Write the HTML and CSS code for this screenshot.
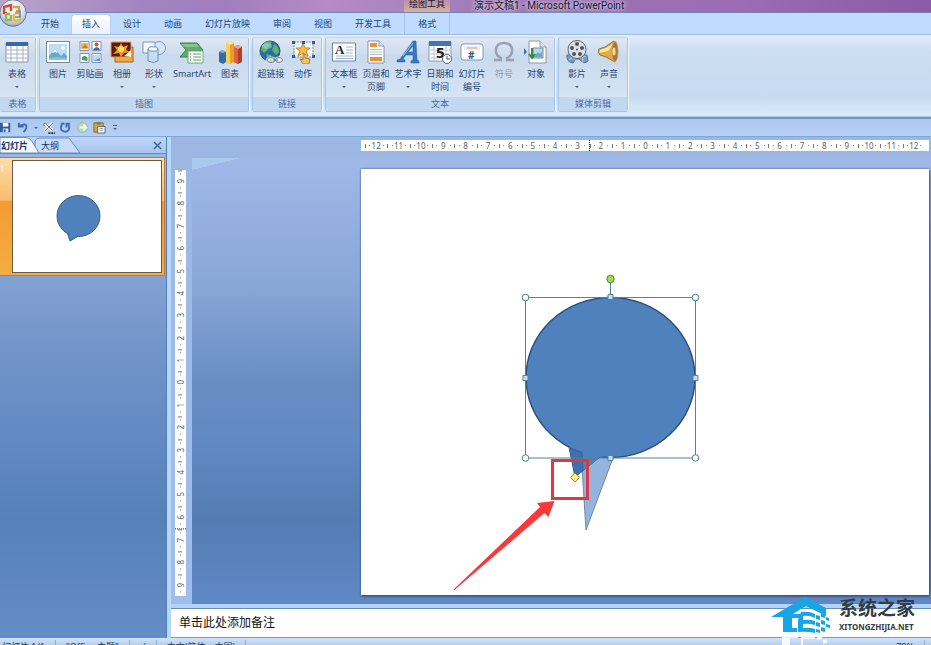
FILE: index.html
```html
<!DOCTYPE html>
<html lang="zh-CN">
<head>
<meta charset="utf-8">
<title>演示文稿1 - Microsoft PowerPoint</title>
<link rel="stylesheet" href="styles.css">
</head>
<body>
<header class="titlebar">
  <span class="context-title">绘图工具</span>
  <h1 class="doc-title">演示文稿1 - Microsoft PowerPoint</h1>
</header>
<button class="orb" aria-label="Office">
  <svg viewBox="0 0 28 28"><defs><radialGradient id="orb" cx=".5" cy=".35" r=".65"><stop offset="0" stop-color="#fff"/><stop offset=".6" stop-color="#e4e6ee"/><stop offset="1" stop-color="#9ba5bd"/></radialGradient></defs><circle cx="14" cy="14" r="13.3" fill="url(#orb)" stroke="#68789c"/><g fill="none" stroke-width="2.4"><path d="M12 12V6L5 8v6h3" stroke="#d8482c"/><path d="M14 8h6v6h-4" stroke="#ef9a38"/><path d="M11 15H7v6h5v-5" stroke="#8dba54"/><path d="M15 15v7l6-1v-6" stroke="#e8c23c"/><path d="M17 12h4v6h-5" stroke="#5a94d4" stroke-width="1.6"/></g></svg>
</button>
<nav class="tabs">
  <a href="#">开始</a><a href="#" class="active">插入</a><a href="#">设计</a><a href="#">动画</a><a href="#">幻灯片放映</a><a href="#">审阅</a><a href="#">视图</a><a href="#">开发工具</a><a href="#" class="context">格式</a>
</nav>
<section class="ribbon">
  <div class="group first">
    <div class="tools">
      <button class="tool"><svg viewBox="0 0 24 24"><path d="M1 3h22v19H1z" fill="#fff" stroke="#8b98ad"/><path d="M1 2h22v4H1z" fill="#3768b4"/><path d="M1 10h22M1 14h22M1 18h22M6 6v16M12 6v16M18 6v16" stroke="#a5b2c6"/></svg><span>表格</span><i class="arrow"></i></button>
    </div>
    <h2>表格</h2>
  </div>
  <div class="group">
    <div class="tools">
      <button class="tool"><svg viewBox="0 0 24 24"><path d="M.5 1.500h23v21H.5z" fill="#fff" stroke="#789"/><path d="M3 4h18v16H3z" fill="#b9def5"/><path d="M3 20v-4l6-7 6 7 3-3 3 3v4z" fill="#6aa5d2"/><path d="M6 13l3-4 3 4-3-1z" fill="#fff"/><path d="M3 18l8-1 10 1v2H3z" fill="#86c6d0"/><circle cx="17" cy="8" r="2" fill="#fff"/></svg><span>图片</span></button>
      <button class="tool"><svg viewBox="0 0 24 24"><g fill="#fff" stroke="#7f94b2"><path d="M2 1.500h9v9H2zM14 1.500h9v9h-9zM2 13.500h9v9H2zM14 13.500h9v9h-9z"/></g><path d="M3 3h7v6H3z" fill="#f0bd42"/><path d="M4 8l3-4 3 4z" fill="#d67b24"/><circle cx="18.500" cy="4.500" r="2" fill="#b35f39"/><path d="M15 10q4-6 7 0z" fill="#356aab"/><path d="M4 20q-1-4 3-4 4 1 2 5z" fill="#4f9f52"/><path d="M15 15h7v6h-7z" fill="#b8dcf1"/><path d="M15 21l7-3v3z" fill="#6094c6"/></svg><span>剪贴画</span></button>
      <button class="tool"><svg viewBox="0 0 24 24"><path d="M5 7h18v15H5z" fill="#f1a93b" stroke="#a76226"/><path d="M1 2h20v15H1z" fill="#5c1b0d" stroke="#e2a064"/><path d="M11 3l2 4 5-2-2 5 4 2-6 1-3 4-2-4-6 1 4-4-3-4 5 1z" fill="#ef982c"/><circle cx="11" cy="9" r="3" fill="#ffe15d"/><path d="M14 16l7-6v7z" fill="#fff3c9"/></svg><span>相册</span><i class="arrow"></i></button>
      <button class="tool"><svg viewBox="0 0 24 24"><circle cx="17" cy="8" r="6.500" fill="#d7e7f6" stroke="#779cc3"/><path d="M1 2h12v11H1z" fill="#f2f7fc" stroke="#7598be"/><path d="M6 9v12q5 3 10 0V9" fill="#c7dcf1" stroke="#6b90bb"/><ellipse cx="11" cy="9" rx="5" ry="2.200" fill="#f4f9fe" stroke="#6b90bb"/></svg><span>形状</span><i class="arrow"></i></button>
      <button class="tool wide"><svg viewBox="0 0 24 24"><path d="M0 3h17l6 7-6 7H0l6-7z" fill="#5cab69" stroke="#3c8050"/><path d="M1 4h16l2 3H4z" fill="#83c58a"/><path d="M8 11h15v12H8z" fill="#fff" stroke="#69a66f"/><path d="M13 14h8M13 17h8M13 20h8" stroke="#5ba066"/><path d="M10 14h1M10 17h1M10 20h1" stroke="#37744a"/></svg><span>SmartArt</span></button>
      <button class="tool"><svg viewBox="0 0 24 24"><path d="M1 12l3-2 4 2v10l-3 2-4-2z" fill="#356aa8"/><path d="M1 12l4 1 3-1-4-2z" fill="#86b4df"/><path d="M8 3l4-2 4 2v19l-4 2-4-2z" fill="#e4a323"/><path d="M8 3l4 2v19l-4-2z" fill="#f8cf55"/><path d="M8 3l4 2 4-2-4-2z" fill="#ffe896"/><path d="M16 7l4-2 4 2v15l-4 2-4-2z" fill="#b93b25"/><path d="M16 7l4 2v15l-4-2z" fill="#dc6342"/><path d="M16 7l4 2 4-2-4-2z" fill="#f7a37d"/></svg><span>图表</span></button>
    </div>
    <h2>插图</h2>
  </div>
  <div class="group">
    <div class="tools">
      <button class="tool"><svg viewBox="0 0 24 24"><circle cx="11" cy="11" r="10" fill="#276fa8" stroke="#255781"/><path d="M5 3q4-3 8-1l-2 4-3 1 1 3-4 3-3-3q0-4 3-7zM15 4q5 2 5 8l-3 3-4-5zM7 14l5 1 1 5-3 1z" fill="#61b16a"/><ellipse cx="8" cy="6" rx="5" ry="3" fill="#b9e4f5" opacity=".5"/><g fill="none" stroke="#f4f6f8" stroke-width="3"><ellipse cx="12" cy="20" rx="3.500" ry="2"/><ellipse cx="20" cy="20" rx="3" ry="2"/></g><g fill="none" stroke="#65717f"><ellipse cx="12" cy="20" rx="4" ry="2.500"/><ellipse cx="20" cy="20" rx="3.500" ry="2.500"/><path d="M14 20h5"/></g></svg><span>超链接</span></button>
      <button class="tool"><svg viewBox="0 0 24 24"><path d="M3 2h19v15H3z" fill="#f1f7fe" stroke="#6b8cb2" stroke-dasharray="2 1"/><path d="M12 3l2 5h5l-4 3 2 5-5-3-5 3 2-5-4-3h5z" fill="#ffbc47" stroke="#cf8525"/><g fill="#315e94"><path d="M1 1h3v3H1zM11 1h3v3h-3zM21 1h3v3h-3zM1 15h3v3H1zM21 15h3v3h-3z"/></g><path d="M12 14l2 1v3l5 1-1 5h-6l-3-5 3 1z" fill="#f8c264" stroke="#b57725"/></svg><span>动作</span></button>
    </div>
    <h2>链接</h2>
  </div>
  <div class="group">
    <div class="tools">
      <button class="tool"><svg viewBox="0 0 24 24"><path d="M.5 3h23v18H.5z" fill="#fff" stroke="#7189a8"/><text x="3" y="14" class="glyph-a">A</text><path d="M14 7h7M14 10h7M14 13h7M4 16h17M4 18.500h17" stroke="#97b9d1"/></svg><span>文本框</span><i class="arrow"></i></button>
      <button class="tool"><svg viewBox="0 0 24 24"><path d="M4 1h11l5 5v17H4z" fill="#fff" stroke="#8494a8"/><path d="M15 1v5h5" fill="#dfe9f2" stroke="#8494a8"/><path d="M6 3h7v4H6zM6 17h12v4H6z" fill="#e69337"/><path d="M6 9.500h12M6 12h12M6 14.500h12" stroke="#b1bdd0"/></svg><span>页眉和<br>页脚</span></button>
      <button class="tool"><svg viewBox="0 0 24 24"><path d="M1 20l3-1L17 1h3l1 19 2 1v2h-8v-2l2-1v-5H10l-3 4 2 1v2H1zM12 12h5V6z" fill="#3477c4" fill-rule="evenodd" stroke="#285c9e" stroke-width=".5"/><path d="M7 16L17 3" stroke="#98c7f2"/></svg><span>艺术字</span><i class="arrow"></i></button>
      <button class="tool"><svg viewBox="0 0 24 24"><path d="M1 2h22v19H1z" fill="#fff" stroke="#899bb3"/><path d="M1 1h22v5H1z" fill="#4773b3"/><path d="M2 10h20M2 14h20M2 18h20M6 6v14M18 6v14" stroke="#b8c5d8"/><text x="8" y="18" class="glyph-five">5</text><circle cx="19" cy="19" r="4.500" fill="#fff" stroke="#5d6877"/><path d="M19 16v3h3" fill="none" stroke="#475463"/></svg><span>日期和<br>时间</span></button>
      <button class="tool"><svg viewBox="0 0 24 24"><rect x="1" y="4" width="22" height="16" rx="2" fill="#fff" stroke="#8797ac"/><path d="M4 6h16v4H4z" fill="#e9edf3"/><path d="M7 8h10" stroke="#ed9b60"/><text x="8" y="19" class="glyph-hash">#</text></svg><span>幻灯片<br>编号</span></button>
      <button class="tool" disabled><svg viewBox="0 0 24 24"><path d="M2 20h7v-2Q3 15 4 9q1-6 8-6t8 6q1 6-5 9v2h7" fill="none" stroke="#9a9fb4" stroke-width="2.400"/></svg><span>符号</span></button>
      <button class="tool"><svg viewBox="0 0 24 24"><path d="M5 1h11l6 6v16H5z" fill="#fff" stroke="#8998aa"/><path d="M16 1v6h6" fill="#e6edf4" stroke="#8998aa"/><path d="M9 8h10v10H9z" fill="#bad6ea" stroke="#778ba1"/><path d="M10 17l4-5 2 2 2-3v6z" fill="#6aa8c8"/><path d="M7 7v9M4 13l3 4 3-4" fill="none" stroke="#348c42" stroke-width="2" transform="translate(1 1)"/><path d="M0 8l3 4-3 3z" fill="#3f73aa"/></svg><span>对象</span></button>
    </div>
    <h2>文本</h2>
  </div>
  <div class="group">
    <div class="tools">
      <button class="tool"><svg viewBox="0 0 24 24"><path d="M2 15q-1 7 6 8l3-4h3q5 6 9 2l-1-6z" fill="#749cc5" stroke="#4e7197"/><path d="M4 20l4-3 3 4M18 22l-1-5 4-1" stroke="#c4d8ed" fill="none"/><circle cx="12" cy="9.500" r="9" fill="#dfe3e8" stroke="#59636e"/><g fill="#4d5660"><circle cx="12" cy="4" r="2"/><circle cx="17" cy="8" r="2"/><circle cx="15" cy="14" r="2"/><circle cx="9" cy="14" r="2"/><circle cx="7" cy="8" r="2"/><circle cx="12" cy="9.500" r="1"/></g></svg><span>影片</span><i class="arrow"></i></button>
      <button class="tool"><svg viewBox="0 0 24 24"><path d="M2 9l6-2L17 1q4 9 1 21L9 17l-6-2q-3-3-1-6z" fill="#dfad43" stroke="#997238"/><path d="M3 10l6-2 8-5-6 8-9 2z" fill="#ffeaa0"/><ellipse cx="18" cy="11.500" rx="3" ry="10" fill="#a57740" stroke="#c69a55"/><ellipse cx="17" cy="11.500" rx="1.500" ry="4" fill="#f8dc91"/></svg><span>声音</span><i class="arrow"></i></button>
    </div>
    <h2>媒体剪辑</h2>
  </div>
</section>
<div class="quick">
  <button aria-label="保存"><svg viewBox="0 0 14 14"><path d="M0 2h11v10H0z" fill="#355b9f"/><path d="M3 2h6v4H3z" fill="#fff"/><path d="M3 8h6v4H3z" fill="#d8e4f2"/><path d="M4 9h2v3H4z" fill="#355b9f"/></svg></button>
  <button aria-label="撤消"><svg viewBox="0 0 14 14"><path d="M2 6q7-4 8-1 1 3-3 7M2 2v4h5" fill="none" stroke="#3b69b3" stroke-width="2"/></svg></button>
  <button class="drop" aria-label="撤消选项"><i class="arrow"></i></button>
  <button aria-label="工具"><svg viewBox="0 0 14 14"><path d="M3 3l8 7M11 2L3 11" stroke="#eef2f5" stroke-width="3"/><path d="M2 3l2-1 1 2 6 6M12 2l-3 3-6 6M1 4l2 1" fill="none" stroke="#5f6a76"/><path d="M7 12h2v2H7zM10 12h2v2h-2zM13 12h1v2h-1z" fill="#222"/></svg></button>
  <button aria-label="重复"><svg viewBox="0 0 14 14"><path d="M3 4q-2 4 0 6 4 3 7 0 2-3 0-6M2 3h4M8 7V3h4" fill="none" stroke="#3c6fbe" stroke-width="2"/></svg></button>
  <button aria-label="继续"><svg viewBox="0 0 14 14"><circle cx="7" cy="7" r="5.500" fill="#b5d9b0" stroke="#9cbca4"/><path d="M4 7h6M8 4l3 3-3 3" fill="none" stroke="#f2faec" stroke-width="2"/></svg></button>
  <button aria-label="粘贴"><svg viewBox="0 0 14 14"><path d="M1 2h10v10H1z" fill="#d8a63c" stroke="#80672c"/><path d="M4 1h4v3H4z" fill="#737a83"/><path d="M5 6h8v7H5z" fill="#fff" stroke="#655f51"/><path d="M7 8h4M7 10h4" stroke="#7791ad"/></svg></button>
  <button class="drop more" aria-label="自定义"><i class="arrow"></i></button>
</div>
<main class="work">
  <aside class="pane">
    <div class="pane-tabs">
      <svg class="tab-lines" viewBox="0 0 80 16" aria-hidden="true"><path d="M35 16V4q1-3 5-3h29l11 15z" fill="#c7dcf8" stroke="#6a8cbf"/><path d="M0 .5h26q4 0 6 4l7 11.500H0z" fill="#f5f9ff" stroke="#6a8cbf"/></svg>
      <button class="pane-tab current">幻灯片</button><button class="pane-tab">大纲</button>
      <button class="close" aria-label="关闭"><svg viewBox="0 0 10 10"><path d="M1 1l8 8M9 1L1 9" stroke="#34609f" stroke-width="1.500"/></svg></button>
    </div>
    <div class="thumb-row">
      <span class="num">1</span>
      <svg class="thumb" viewBox="0 0 148 111"><path d="M54 71l3 9 10-6" fill="#4f81bd" stroke="#385d8a"/><ellipse cx="65.500" cy="55" rx="21.500" ry="20.500" fill="#4f81bd" stroke="#385d8a"/><path d="M55 69l2.500 10 8-5z" fill="#4f81bd"/></svg>
    </div>
  </aside>
  <section class="editor">
    <div class="stage">
      <ol class="ruler across"><li>12</li><li>11</li><li>10</li><li>9</li><li>8</li><li>7</li><li>6</li><li>5</li><li>4</li><li class="mark">3</li><li>2</li><li>1</li><li>0</li><li>1</li><li>2</li><li>3</li><li>4</li><li>5</li><li>6</li><li>7</li><li>8</li><li>9</li><li>10</li><li>11</li><li>12</li></ol>
      <ol class="ruler down"><li>9</li><li>8</li><li>7</li><li>6</li><li>5</li><li>4</li><li>3</li><li>2</li><li>1</li><li>0</li><li>1</li><li>2</li><li>3</li><li>4</li><li>5</li><li>6</li><li class="mark">7</li><li>8</li><li>9</li></ol>
      <div class="canvas">
        <svg class="slide" viewBox="361 169 568 426">
          <path d="M581 452L586 530 613 458z" fill="#95b3db" stroke="#6b88ad"/>
          <path d="M569 447L575 477 600 457Z" fill="#416fab" stroke="#31517d"/>
          <ellipse cx="610.500" cy="377.500" rx="84.500" ry="80" fill="#4f81bd" stroke="#29507f" stroke-width="1.500"/>
          <path d="M569 447L582 452 583 471 600 457 610 455 590 440z" fill="#4f81bd"/>
          <path d="M569 447L582 452 583 471 575 477z" fill="#416fae"/>
          <path d="M569 448L582 452.500 583 471" fill="none" stroke="#3960a0"/>
          <path d="M525.500 297.500h170v160.500h-170zM610.500 283v14" fill="none" stroke="#57809b"/>
          <g fill="#f4fcff" stroke="#527c91"><circle cx="525.500" cy="297.500" r="3.300"/><circle cx="695.500" cy="297.500" r="3.300"/><circle cx="525.500" cy="458" r="3.300"/><circle cx="695.500" cy="458" r="3.300"/></g>
          <g fill="#bfe0ef" stroke="#5a8199"><path d="M608 294.500h5v5h-5zM608 455.500h5v5h-5zM523 375.500h5v5h-5zM693 375.500h5v5h-5z"/></g>
          <circle cx="610.500" cy="279" r="3.700" fill="#9bdd58" stroke="#547d44"/>
          <path d="M575 473l4.500 4.500-4.500 4.500-4.500-4.500z" fill="#fff476" stroke="#9a8839"/>
          <path d="M552.500 460.500h35v38h-35z" fill="none" stroke="#da3a43" stroke-width="3"/>
          <path d="M453.500 589.500L540 507l-3-4 17.500-2-6 16-4-4-90 77z" fill="#f8393c"/>
        </svg>
      </div>
    </div>
    <div class="notes">单击此处添加备注</div>
  </section>
</main>
<footer class="status"><span>幻灯片 1/1</span><span>"Office 主题"</span><span>✓</span><span>中文(简体，中国)</span><span class="zoom">78%</span></footer>
<div class="brand">
  <svg viewBox="770 598 60 48" aria-hidden="true">
    <g id="house" fill="#18a5e5"><path d="M770 618L804 598l21 11v8l-20-10-13 8h9v4h-10v10h5v4h-14v-15z"/><path d="M800 613q8-1 14 2v4q-6-3-12-2v4q6-1 12 1v4q-6-2-12-1v4q6-1 12 1v4q-8-2-17-1v-12z"/><path d="M815 616l4 1v4l-4-1zM820 614l4 1v4l-4-1zM815 623l4 1v4l-4-1zM820 621l4 1v4l-4-1zM815 630l4 1v3l-4-1zM820 628l4 1v4l-4-1zM825 618l3 1v3l-3-1zM825 625l4 1v3l-4-1z"/></g>
    <path d="M781 636h16v3h-8v7h-8zM800 638l14-2v4h-12v6h-2zM816 637l5-1v4l-5 1zM822 641l4-1v4l-4 1z" fill="#fff" opacity=".85"/>
  </svg>
  <div class="brand-text"><strong>系统之家</strong><span>XITONGZHIJIA.NET</span></div>
</div>
</body>
</html>
```
FILE: styles.css
```css
* { box-sizing: border-box; }
body {
  margin: 0;
  min-height: 100vh;
  display: flex;
  flex-direction: column;
  position: relative;
  overflow: hidden;
  background: #b0cbf0;
  color: #264777;
  font: 9px/13px "Noto Sans", "Noto Sans CJK SC", sans-serif;
}
button { border: 0; padding: 0; background: none; color: inherit; font: inherit; }
svg { display: block; }
h1, h2, ol { margin: 0; padding: 0; font: inherit; }

.titlebar {
  height: 13px;
  display: flex;
  padding-left: 404px;
  background: linear-gradient(90deg, #b9a5cc 0, #a384c0 15%, #a27dbd 24%, #b58bc5 35%, #9874b2 60%, #9d6bb5 80%, #8c5aa6);
  border-bottom: 1px solid #7383ad;
  color: #17172c;
  white-space: nowrap;
}
.context-title { width: 46px; height: 12px; overflow: hidden; text-align: center; line-height: 7px; background: linear-gradient(#b891ab, #d5b29b); }
.doc-title { margin-left: 24px; font-family: Roboto, "Noto Sans CJK SC", sans-serif; font-size: 10px; line-height: 11px; text-shadow: 0 0 5px #e7dff2, 0 0 5px #e7dff2; }
.orb { position: absolute; left: -1px; top: -1px; width: 28px; height: 28px; z-index: 2; }

.tabs { display: flex; gap: 3px; height: 21px; padding-left: 31px; background: #bfdbff; }
.tabs a { display: block; padding: 4px 10px; color: #20457c; text-decoration: none; white-space: nowrap; }
.tabs .active { margin-top: 2px; padding-top: 2px; background: linear-gradient(#fff, #e8f0fa); border-radius: 3px 3px 0 0; box-shadow: 0 0 1px #607eac; }
.tabs .context { padding: 4px 14px; box-shadow: inset 1px 0 #a8c4e4, inset -1px 0 #a8c4e4; }

.ribbon {
  display: flex;
  gap: 3px;
  height: 83px;
  padding: 2px 0 4px;
  background: linear-gradient(#e4edf9, #cddef1 18%, #c7daf0 75%, #d9ebfb);
  border-top: 1px solid #9ebde3;
  border-bottom: 1px solid #a8c8ea;
}
.group {
  display: flex;
  flex-direction: column;
  flex: none;
  border: 1px solid #aac5e2;
  border-top-color: #c3d5e9;
  border-radius: 2px;
  background: linear-gradient(#dfe8f4, #cddcee 22%, #c9daed 24%, #dae8f5);
  box-shadow: 1px 0 #f0f7ff;
}
.group.first { border-left: 0; }
.tools { display: flex; flex: 1; padding: 2px 2px 0; }
.group.first .tools { padding: 2px 2px 0 1px; }
.group h2 { padding-bottom: 1px; text-align: center; background: #c1d8f0; color: #496c9c; }
.tool { display: flex; flex-direction: column; align-items: center; width: 32px; white-space: nowrap; }
.tool.wide { width: 44px; }
.tool svg { width: 24px; height: 24px; margin-bottom: 3px; flex: none; }
.tool:disabled { color: #9299ad; }
.arrow { width: 0; height: 0; border: 2px solid transparent; border-top-color: #4b6285; border-bottom: 0; }
.tool .arrow { margin-top: 6px; }
.glyph-a { font: bold 13px "Liberation Serif", serif; fill: #222; }
.glyph-five { font: bold 15px "Noto Sans", sans-serif; fill: #222; }
.glyph-hash { font: bold 10px "Noto Sans", sans-serif; fill: #335f91; }

.quick {
  display: flex;
  align-items: center;
  gap: 4px;
  height: 20px;
  border-top: 2px solid #7298bf;
  border-bottom: 1px solid #81a5d6;
  background: linear-gradient(#adc8eb, #b5d0f6);
}
.quick svg { width: 13px; height: 13px; }
.quick .drop { width: 4px; }
.quick .more { border-top: 1px solid #465d80; padding-top: 2px; margin-left: 3px; }
.quick .drop .arrow { display: block; }

.work { flex: 1; display: flex; min-height: 0; }
.pane { width: 167px; flex: none; border-right: 1px solid #527eb5; background: linear-gradient(#9ab8e6, #83a2d4 28%, #7394c8 42%, #6289c3 60%, #5681b8 76%, #648cc8); }
.pane-tabs { position: relative; display: flex; align-items: center; height: 17px; background: linear-gradient(#bed6f7, #a7c5ef); border-bottom: 1px solid #6489bf; color: #173468; }
.tab-lines { position: absolute; left: 0; top: 0; width: 80px; height: 16px; }
.pane-tab { position: relative; width: 36px; text-align: left; padding: 0 1px; }
.pane-tab.current { width: 40px; font-weight: bold; }
.close { margin-left: auto; padding-right: 4px; }
.close svg { width: 9px; height: 9px; }
.thumb-row {
  display: grid;
  grid-template-columns: 13px 1fr;
  margin: 3px 1px 0 0;
  padding: 3px 3px 3px 0;
  background: linear-gradient(#ffdda9, #f7bc70 36%, #f29c31 37%, #f4ad43);
  border: 1px solid #bd7c40;
  border-left: 0;
}
.num { padding-top: 1px; color: #fff; font-size: 8px; }
.thumb { width: 100%; background: #fff; outline: 1px solid #6b5a48; }

.editor { flex: 1; min-width: 0; display: flex; flex-direction: column; border-left: 4px solid #b6d6fa; }
.stage { flex: 1; display: grid; grid-template-columns: 21px 169px 1fr; grid-template-rows: 21px 1fr; background: linear-gradient(#9bb7e2, #a1bdea); }
.ruler { display: flex; list-style: none; background: #fff; color: #5b5f66; font-size: 8px; line-height: 11px; text-align: center; }
.ruler li { flex: 1; min-width: 0; }
.across { grid-column: 3; height: 11px; margin: 3px 2px 0 0; padding: 0 4px; }
.across li {
  background:
    linear-gradient(#777, #777) left center / 1px 4px no-repeat,
    linear-gradient(#888, #888) 20% center / 1px 1px no-repeat,
    linear-gradient(#888, #888) 82% center / 1px 1px no-repeat;
}
.across .mark { border-right: 1px dotted #222; }
.down { grid-column: 1; grid-row: 2; flex-direction: column; margin: 12px 6px 8px 4px; }
.down li {
  writing-mode: vertical-rl;
  transform: rotate(180deg);
  background:
    linear-gradient(#777, #777) center bottom / 4px 1px no-repeat,
    linear-gradient(#888, #888) center 20% / 1px 1px no-repeat,
    linear-gradient(#888, #888) center 82% / 1px 1px no-repeat;
}
.down .mark { border-bottom: 1px dotted #222; }
.canvas {
  grid-column: 2 / 4;
  grid-row: 2;
  padding: 11px 2px 9px 169px;
  background:
    linear-gradient(to bottom right, #a7caed 49%, transparent 51%) 0 0 / 48px 12px no-repeat,
    linear-gradient(#a0b9e8, #87a5d7 30%, #698dc2 50%, #6089c4 65%, #537cb2 81%, #6188c7);
}
.slide { width: 100%; background: #fff; box-shadow: 0 0 2px #304b72, 1px 2px 2px #3f608d; }
.notes { height: 34px; padding: 8px 8px; border-top: 4px solid #b3d3fa; border-bottom: 1px solid #7899c5; background: #fff; box-shadow: inset 0 1px #6b8cb9; color: #111; font-size: 12px; line-height: 14px; }
.status { display: flex; height: 7px; overflow: hidden; padding: 2px 6px 0 2px; background: linear-gradient(#d3e4fa, #b4cef0); color: #17365f; white-space: nowrap; }
.status span { margin-right: 10px; padding-right: 10px; border-right: 1px solid #93adcf; }
.status .zoom { margin: 0 0 0 auto; }

.brand { position: absolute; right: 15px; bottom: 0; display: flex; gap: 8px; align-items: flex-start; color: #333b43; }
.brand svg { width: 60px; height: 48px; }
.brand-text { display: flex; flex-direction: column; gap: 1px; width: 77px; }
.brand strong { font-size: 19px; line-height: 23px; white-space: nowrap; }
.brand span { font-size: 8px; line-height: 12px; font-weight: bold; white-space: nowrap; }
```
